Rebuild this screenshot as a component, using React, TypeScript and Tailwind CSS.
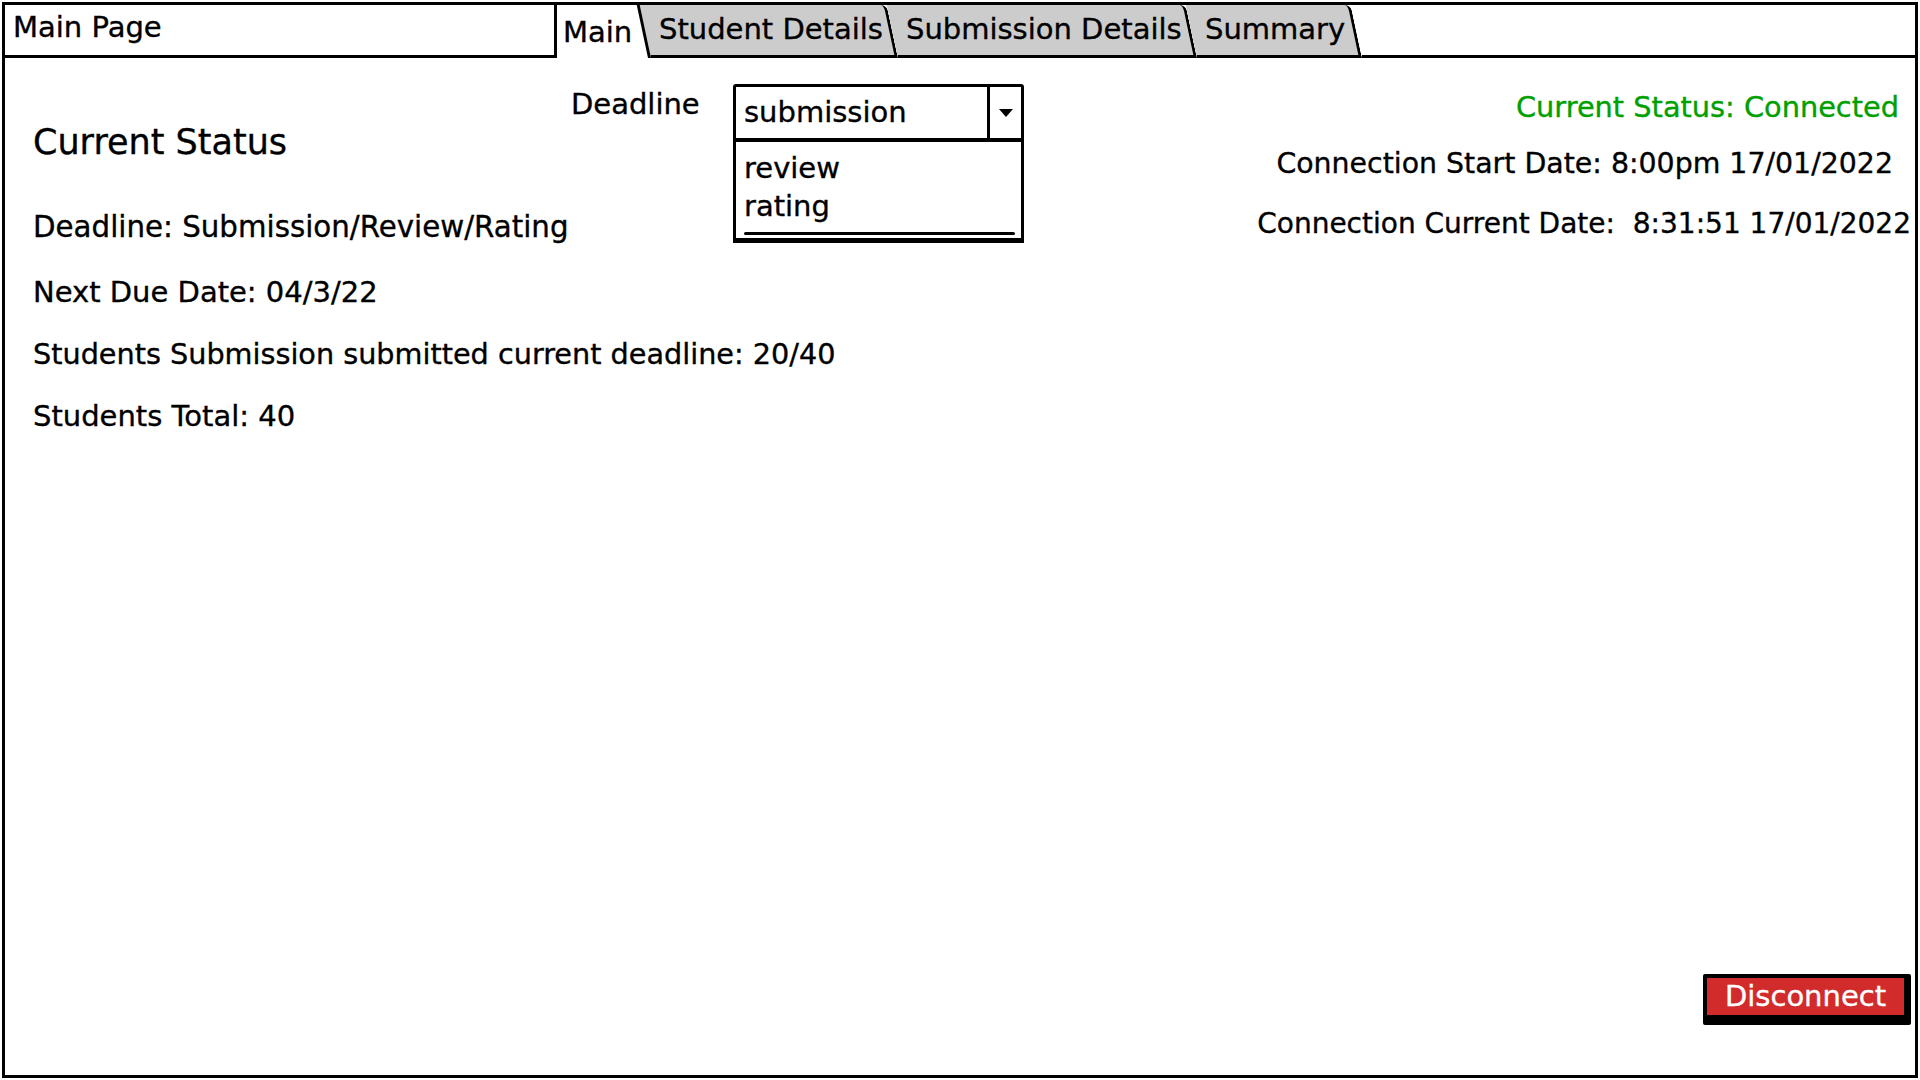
import React from "react";

const font = { fontFamily: '"DejaVu Sans", sans-serif' };

function GreyTab({ label, w }: { label: string; w: string }) {
  return (
    <div className={`relative ${w} flex items-center pl-[8px] pb-[4px]`}>
      <div className="absolute inset-0 bg-[#cccccc] border-r-[3px] border-b-[3px] border-black origin-bottom skew-x-[12deg] rounded-tr-[6px]" />
      <span className="relative whitespace-nowrap">{label}</span>
    </div>
  );
}

export default function App() {
  return (
    <div
      className="w-[1920px] h-[1080px] bg-white p-[2px] text-black text-[29px] [-webkit-text-stroke:0.35px_currentColor]"
      style={font}
    >
      <div className="w-full h-full border-[3px] border-black flex flex-col">
        {/* header / tab bar */}
        <div className="flex h-[53px] shrink-0">
          <div className="w-[552px] shrink-0 border-r-[3px] border-b-[3px] border-black flex items-center pl-[8px] pb-[4px]">
            Main Page
          </div>
          <div className="relative w-[94px] shrink-0 flex items-center pl-[6px] pt-[2px]">
            <span>Main</span>
            <span className="absolute right-0 top-0 bottom-0 w-[3px] bg-black origin-bottom skew-x-[12deg] z-10" />
          </div>
          <GreyTab label="Student Details" w="w-[247px]" />
          <GreyTab label="Submission Details" w="w-[299px]" />
          <GreyTab label="Summary" w="w-[165px]" />
          <div className="flex-1 border-b-[3px] border-black" />
        </div>

        {/* content */}
        <div className="flex-1 flex flex-col">
          <div className="flex">
            <div className="w-[566px] shrink-0 pl-[28px] pt-[63px] flex flex-col whitespace-nowrap leading-[34px]">
              <div className="text-[35px] leading-[42px]">Current Status</div>
              <div className="mt-[47px] text-[29.3px]">Deadline: Submission/Review/Rating</div>
              <div className="mt-[31px]">Next Due Date: 04/3/22</div>
              <div className="mt-[28px] text-[28.7px]">Students Submission submitted current deadline: 20/40</div>
              <div className="mt-[28px]">Students Total: 40</div>
            </div>

            <div className="flex shrink-0 pt-[26px]">
              <div className="w-[162px] pt-[3px] leading-[34px]">Deadline</div>
              <div className="relative w-[291px] h-[57px] border-[3px] border-black rounded-[3px] flex bg-white self-start">
                <div className="flex-1 flex items-center pl-[8px]">submission</div>
                <div className="w-[34px] border-l-[3px] border-black flex items-center justify-center">
                  <svg width="14" height="8" viewBox="0 0 14 8">
                    <polygon points="0,0 14,0 7,8" fill="#000" />
                  </svg>
                </div>
                <div className="absolute top-[calc(100%+1px)] left-[-3px] right-[-3px] h-[104px] border-[3px] border-t-[3px] border-b-[5px] border-black bg-white flex flex-col pl-[8px] pt-[9px] leading-[34px]">
                  <div>review</div>
                  <div className="mt-[4px]">rating</div>
                  <div className="absolute left-[8px] right-[6px] bottom-[3px] h-[3px] bg-black rounded-full" />
                </div>
              </div>
            </div>

            <div className="flex-1 flex flex-col items-end pt-[32px] leading-[34px] whitespace-nowrap">
              <div className="text-[#00a000] text-[28.8px] mr-[16px]">Current Status: Connected</div>
              <div className="mt-[23px] mr-[22px] text-[28.4px]">Connection Start Date: 8:00pm 17/01/2022</div>
              <div className="mt-[26px] mr-[4px] text-[28px]">Connection Current Date:&nbsp; 8:31:51 17/01/2022</div>
            </div>
          </div>

          <div className="flex-1" />

          <div className="self-end mr-[4px] mb-[50px] bg-black pl-[4px] pt-[4px] pr-[7px] pb-[10px] rounded-[2px]">
            <div className="w-[197px] h-[37px] bg-[#d22b2b] text-white flex items-center justify-center">
              Disconnect
            </div>
          </div>
        </div>
      </div>
    </div>
  );
}
